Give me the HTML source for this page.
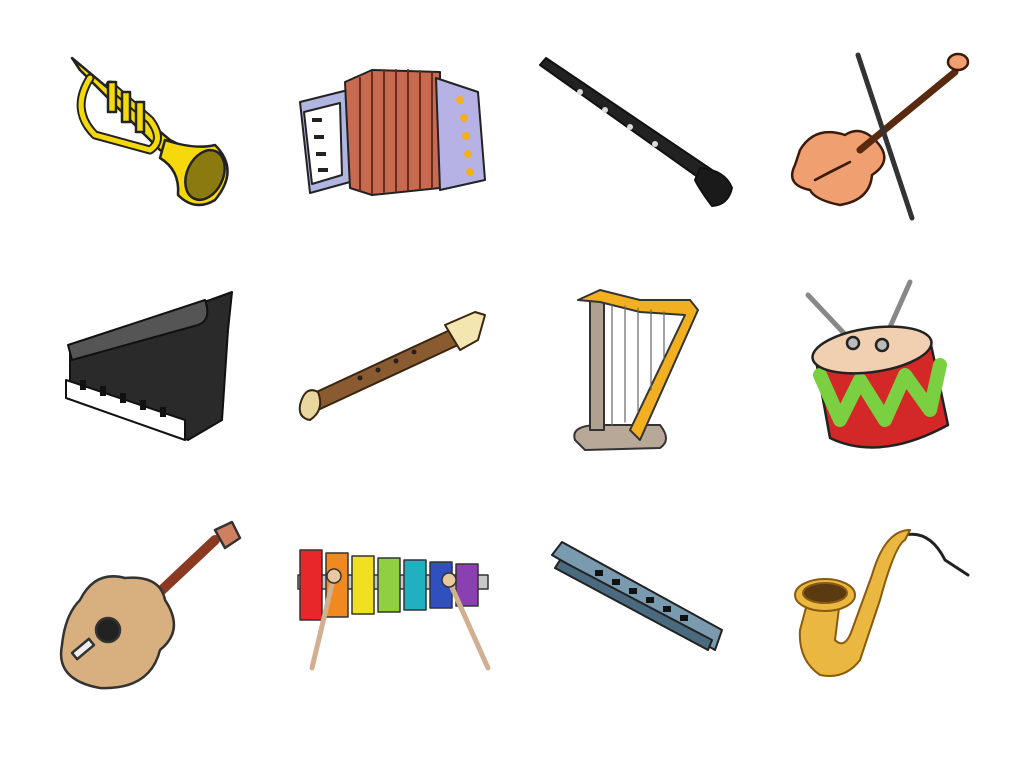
<!DOCTYPE html>
<html><head><meta charset="utf-8"><style>html,body{margin:0;padding:0;background:#fff}svg{display:block}</style></head>
<body>
<svg width="1024" height="768" viewBox="0 0 1024 768" xmlns="http://www.w3.org/2000/svg" stroke-linejoin="round" stroke-linecap="round">
<!-- Trumpet -->
<g stroke="#222" stroke-width="2.5">
<path d="M72 58 L170 140 L190 150 L182 165 L160 150 L80 70 Z" fill="#f5d90a"/>
<path d="M90 78 Q70 110 95 135 L150 150 Q165 140 150 120 L110 85" fill="none" stroke="#222" stroke-width="9"/>
<path d="M90 78 Q70 110 95 135 L150 150 Q165 140 150 120 L110 85" fill="none" stroke="#f5d90a" stroke-width="5"/>
<path d="M165 140 Q195 150 215 145 Q240 170 215 200 Q195 212 178 195 Q180 170 160 158 Z" fill="#f5d90a"/>
<ellipse cx="205" cy="175" rx="18" ry="26" transform="rotate(25 205 175)" fill="#8a7a10"/>
<rect x="108" y="82" width="8" height="30" fill="#f5d90a"/><rect x="122" y="92" width="8" height="30" fill="#f5d90a"/><rect x="136" y="102" width="8" height="30" fill="#f5d90a"/>
</g>
<!-- Accordion -->
<g stroke="#222" stroke-width="2">
<path d="M300 102 L348 90 L350 182 L310 193 Z" fill="#b0b6e0"/>
<path d="M304 112 L340 103 L342 175 L312 184 Z" fill="#fff"/>
<g fill="#222" stroke="none"><rect x="312" y="118" width="10" height="4"/><rect x="314" y="135" width="10" height="4"/><rect x="316" y="152" width="10" height="4"/><rect x="318" y="168" width="10" height="4"/></g>
<path d="M345 82 L372 70 L440 72 L440 188 L372 195 L350 188 Z" fill="#c86a50"/>
<g stroke="#6b2a1a" stroke-width="2"><path d="M360 78 V190"/><path d="M372 72 V193"/><path d="M384 70 V192"/><path d="M396 70 V191"/><path d="M408 70 V190"/><path d="M420 71 V189"/><path d="M432 72 V188"/></g>
<path d="M436 78 L478 92 L485 180 L440 190 Z" fill="#b6b2e6"/>
<g fill="#f0b020" stroke="none"><circle cx="460" cy="100" r="4"/><circle cx="464" cy="118" r="4"/><circle cx="466" cy="136" r="4"/><circle cx="468" cy="154" r="4"/><circle cx="470" cy="172" r="4"/></g>
</g>
<!-- Clarinet -->
<g stroke="#111" stroke-width="2">
<path d="M540 65 L546 58 L712 170 L702 180 Z" fill="#222"/>
<path d="M700 168 Q725 170 732 188 Q728 205 712 206 Q700 190 695 180 Z" fill="#1a1a1a"/>
<g fill="#ddd" stroke="none"><circle cx="580" cy="92" r="3"/><circle cx="605" cy="110" r="3"/><circle cx="630" cy="127" r="3"/><circle cx="655" cy="144" r="3"/></g>
</g>
<!-- Violin -->
<g stroke="#3a1a0a" stroke-width="2.5">
<path d="M800 150 Q815 125 845 135 Q860 125 875 140 Q895 160 872 175 Q870 200 840 205 Q815 200 810 190 Q785 185 795 165 Z" fill="#f0a070"/>
<path d="M860 150 L955 72" stroke="#5a2a10" stroke-width="7"/>
<ellipse cx="958" cy="62" rx="10" ry="8" fill="#f0a070"/>
<path d="M858 55 L912 218" stroke="#333" stroke-width="5"/>
<path d="M815 180 L850 162 L830 172 Z" fill="#333"/>
</g>
<!-- Piano -->
<g stroke="#111" stroke-width="2">
<path d="M70 345 L210 300 L232 292 L228 330 L222 420 L188 440 L70 395 Z" fill="#2a2a2a"/>
<path d="M68 345 L205 300 Q212 320 198 325 L72 360 Z" fill="#555"/>
<path d="M66 380 L185 420 L185 440 L66 398 Z" fill="#fff"/>
<g fill="#111" stroke="none"><rect x="80" y="380" width="6" height="10"/><rect x="100" y="386" width="6" height="10"/><rect x="120" y="393" width="6" height="10"/><rect x="140" y="400" width="6" height="10"/><rect x="160" y="407" width="6" height="10"/></g>
</g>
<!-- Recorder -->
<g stroke="#3a2510" stroke-width="2">
<path d="M310 395 L450 330 L458 345 L318 410 Z" fill="#8a5a30"/>
<path d="M300 405 Q305 385 318 392 Q325 410 310 420 Q298 418 300 405 Z" fill="#e8d8a0"/>
<path d="M445 325 L475 312 L485 315 L478 340 L460 350 Z" fill="#f4e6b0"/>
<g fill="#222" stroke="none"><circle cx="360" cy="378" r="2.5"/><circle cx="378" cy="370" r="2.5"/><circle cx="396" cy="361" r="2.5"/><circle cx="414" cy="352" r="2.5"/></g>
</g>
<!-- Harp -->
<g stroke="#333" stroke-width="2">
<path d="M575 440 Q570 425 600 425 L660 425 Q672 440 660 448 L585 450 Z" fill="#b8a898"/>
<rect x="590" y="300" width="14" height="130" fill="#b0a090"/>
<path d="M578 300 L600 290 L640 300 L690 300 L698 310 L640 440 L630 430 L685 315 L640 312 L600 302 Z" fill="#f2b020"/>
<g stroke="#666" stroke-width="1.2"><path d="M612 305 V425"/><path d="M625 306 V422"/><path d="M638 308 V412"/><path d="M651 310 V390"/><path d="M664 312 V360"/></g>
</g>
<!-- Drum -->
<g stroke="#222" stroke-width="2.5">
<path d="M808 295 L855 345" stroke="#888" stroke-width="5"/><path d="M910 282 L882 345" stroke="#888" stroke-width="5"/>
<path d="M815 355 L830 438 Q880 462 948 425 L930 340 Z" fill="#d42828"/>
<path d="M820 375 L840 420 L860 380 L885 420 L905 375 L930 410 L940 365" fill="none" stroke="#7ad040" stroke-width="14"/>
<ellipse cx="872" cy="350" rx="60" ry="22" fill="#f0d0b0" transform="rotate(-8 872 350)"/>
<circle cx="853" cy="343" r="6" fill="#bbb"/><circle cx="882" cy="345" r="6" fill="#bbb"/>
</g>
<!-- Guitar -->
<g stroke="#333" stroke-width="2.5">
<path d="M130 620 L215 540" stroke="#8a3a20" stroke-width="10"/>
<path d="M215 530 L232 522 L240 538 L225 548 Z" fill="#d08060"/>
<path d="M80 600 Q95 570 125 578 Q160 575 165 600 Q185 630 160 650 Q150 690 100 688 Q55 680 62 645 Q65 615 80 600 Z" fill="#d8b080"/>
<circle cx="108" cy="630" r="12" fill="#222"/>
<rect x="72" y="645" width="22" height="8" fill="#eee" transform="rotate(-40 83 649)"/>
</g>
<!-- Xylophone -->
<g stroke="#333" stroke-width="1.5">
<rect x="298" y="575" width="190" height="14" fill="#c8c8c8"/>
<rect x="300" y="550" width="22" height="70" fill="#e82828"/>
<rect x="326" y="553" width="22" height="64" fill="#f08a20"/>
<rect x="352" y="556" width="22" height="58" fill="#f0e020"/>
<rect x="378" y="558" width="22" height="54" fill="#90d040"/>
<rect x="404" y="560" width="22" height="50" fill="#20b0c0"/>
<rect x="430" y="562" width="22" height="46" fill="#3050c0"/>
<rect x="456" y="564" width="22" height="42" fill="#8a40b0"/>
<path d="M333 580 L312 668" stroke="#d0b090" stroke-width="5"/><circle cx="334" cy="576" r="7" fill="#e8c8a0"/>
<path d="M450 583 L488 668" stroke="#d0b090" stroke-width="5"/><circle cx="449" cy="580" r="7" fill="#e8c8a0"/>
</g>
<!-- Harmonica -->
<g stroke="#222" stroke-width="2">
<path d="M552 555 L562 542 L722 630 L715 650 Z" fill="#7a9ab0"/>
<path d="M560 560 L712 640 L708 650 L555 568 Z" fill="#4a6a80"/>
<g fill="#111" stroke="none"><rect x="595" y="570" width="8" height="6"/><rect x="612" y="579" width="8" height="6"/><rect x="629" y="588" width="8" height="6"/><rect x="646" y="597" width="8" height="6"/><rect x="663" y="606" width="8" height="6"/><rect x="680" y="615" width="8" height="6"/></g>
</g>
<!-- Saxophone -->
<g stroke="#8a5a10" stroke-width="2">
<path d="M905 535 Q930 530 945 560 L968 575" fill="none" stroke="#222" stroke-width="3"/>
<path d="M905 540 Q895 545 880 600 L860 660 Q845 680 820 675 Q798 660 800 630 L808 600 L840 600 L835 640 Q845 650 852 630 L872 575 Q885 530 910 530 Z" fill="#eab840"/>
<ellipse cx="825" cy="595" rx="30" ry="16" fill="#eab840"/>
<ellipse cx="825" cy="593" rx="22" ry="10" fill="#5a3a10"/>
</g>
</svg>
</body></html>
